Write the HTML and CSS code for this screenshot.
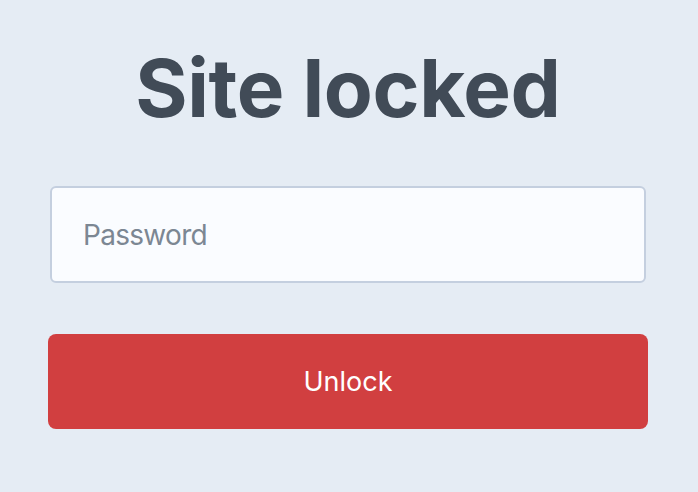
FILE: index.html
```html
<!DOCTYPE html>
<html>
<head>
<meta charset="utf-8">
<link rel="stylesheet" href="styles.css">
</head>
<body>
<main class="page">
  <h1 class="title">Site locked</h1>
  <form class="form">
    <input class="field" type="password" placeholder="Password">
    <button class="btn" type="button">Unlock</button>
  </form>
</main>
</body>
</html>
```
FILE: styles.css
```css
html, body {
  margin: 0;
  padding: 0;
  background: #e5ecf4;
  font-family: Inter, "Noto Sans", sans-serif;
}
.page {
  padding: 40px 50px 0 48px;
  display: flex;
  flex-direction: column;
  align-items: stretch;
}
.title {
  margin: 0;
  text-align: center;
  font-size: 80px;
  font-weight: 700;
  line-height: 96px;
  color: #414b57;
  letter-spacing: -0.4px;
}
.form {
  margin-top: 50px;
  display: flex;
  flex-direction: column;
}
.field {
  box-sizing: border-box;
  margin: 0 2px;
  height: 97px;
  border: 2px solid #c4cfdf;
  border-radius: 6px;
  background: #fafcff;
  padding: 0 31px;
  font-family: Inter, "Noto Sans", sans-serif;
  font-size: 28px;
  letter-spacing: -0.7px;
  color: #414b57;
  outline: none;
}
.field::placeholder {
  color: #7c8793;
}
.btn {
  margin-top: 51px;
  height: 95px;
  border: none;
  border-radius: 8px;
  background: #d13f40;
  color: #ffffff;
  font-family: Inter, "Noto Sans", sans-serif;
  font-size: 27px;
  cursor: pointer;
}
```
